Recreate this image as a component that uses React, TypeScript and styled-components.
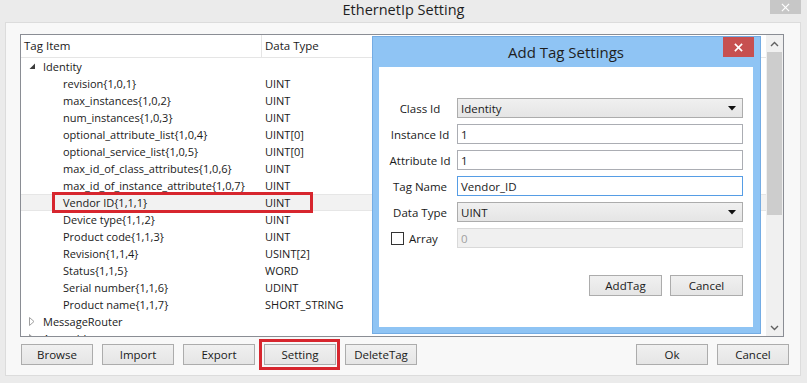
import styled, { createGlobalStyle } from "styled-components";

type TreeRow = {
  level: number;
  name: string;
  type?: string;
  expander?: "open" | "closed";
  selected?: boolean;
};

const rows: TreeRow[] = [
  { level: 0, name: "Identity", expander: "open" },
  { level: 1, name: "revision{1,0,1}", type: "UINT" },
  { level: 1, name: "max_instances{1,0,2}", type: "UINT" },
  { level: 1, name: "num_instances{1,0,3}", type: "UINT" },
  { level: 1, name: "optional_attribute_list{1,0,4}", type: "UINT[0]" },
  { level: 1, name: "optional_service_list{1,0,5}", type: "UINT[0]" },
  { level: 1, name: "max_id_of_class_attributes{1,0,6}", type: "UINT" },
  { level: 1, name: "max_id_of_instance_attribute{1,0,7}", type: "UINT" },
  { level: 1, name: "Vendor ID{1,1,1}", type: "UINT", selected: true },
  { level: 1, name: "Device type{1,1,2}", type: "UINT" },
  { level: 1, name: "Product code{1,1,3}", type: "UINT" },
  { level: 1, name: "Revision{1,1,4}", type: "USINT[2]" },
  { level: 1, name: "Status{1,1,5}", type: "WORD" },
  { level: 1, name: "Serial number{1,1,6}", type: "UDINT" },
  { level: 1, name: "Product name{1,1,7}", type: "SHORT_STRING" },
  { level: 0, name: "MessageRouter", expander: "closed" },
  { level: 0, name: "Assembly", expander: "closed" },
];

const GlobalStyle = createGlobalStyle`
  html, body {
    margin: 0;
    padding: 0;
    background: #ebebeb;
  }
  body {
    font-family: "Open Sans", "Noto Sans", sans-serif;
    color: #1a1a1a;
  }
  * { box-sizing: border-box; }
`;

const Window = styled.div`
  position: relative;
  width: 807px;
  height: 383px;
  overflow: hidden;
  background: #ebebeb;
  display: flex;
  flex-direction: column;
`;

const TitleBar = styled.div`
  height: 22px;
  display: grid;
  grid-template-columns: 1fr auto 1fr;
  align-items: start;
`;

const Title = styled.div`
  grid-column: 2;
  font-size: 14.5px;
  line-height: 20px;
  color: #1e1e1e;
`;

const WinClose = styled.div`
  grid-column: 3;
  justify-self: end;
  margin-right: 6px;
  width: 31px;
  height: 14px;
  background: #c7c7c7;
  display: flex;
  align-items: center;
  justify-content: center;
`;

const Panel = styled.div`
  margin: 0 6px 0 5px;
  height: 354px;
  border: 1px solid #dcdcdc;
  background: #f8f8f8;
  padding: 11px 11px 0 14px;
  display: flex;
  flex-direction: column;
`;

const ListBox = styled.div`
  width: 764px;
  height: 303px;
  border: 1px solid #8a8d94;
  background: #fff;
  display: flex;
`;

const ListContent = styled.div`
  flex: 1;
  overflow: hidden;
  font-size: 11px;
`;

const HeaderRow = styled.div`
  height: 23px;
  display: grid;
  grid-template-columns: 241px 1fr;
  border-bottom: 1px solid #e5e5e5;
`;

const HeaderCell = styled.div<{ $divider?: boolean }>`
  padding-left: 3px;
  line-height: 22px;
  font-size: 11.5px;
  border-right: ${({ $divider }) => ($divider ? "1px solid #e5e5e5" : "none")};
`;

const Row = styled.div<{ $selected?: boolean }>`
  height: 17px;
  display: grid;
  grid-template-columns: 241px 1fr;
  align-items: center;
  background: ${({ $selected }) => ($selected ? "#f2f2f2" : "transparent")};
  box-shadow: ${({ $selected }) =>
    $selected ? "inset 0 1px 0 #e6e6e6, inset 0 -1px 0 #e6e6e6" : "none"};
`;

const NameCell = styled.div<{ $level: number }>`
  display: flex;
  align-items: center;
  padding-left: ${({ $level }) => ($level === 0 ? 8 : 42)}px;
  white-space: nowrap;
  line-height: 17px;
`;

const Expander = styled.span`
  width: 14px;
  display: inline-flex;
  align-items: center;
`;

const TypeCell = styled.div`
  padding-left: 3px;
  white-space: nowrap;
  line-height: 17px;
`;

const ScrollBar = styled.div`
  width: 17px;
  background: #f0f0f0;
  display: flex;
  flex-direction: column;
  align-items: center;
`;

const ScrollArrow = styled.div`
  height: 17px;
  width: 100%;
  display: flex;
  align-items: center;
  justify-content: center;
`;

const Thumb = styled.div`
  width: 15px;
  height: 163px;
  background: #cdcdcd;
`;

const Track = styled.div`
  flex: 1;
`;

const ButtonRow = styled.div`
  display: flex;
  gap: 9px;
  margin-top: 7px;
  padding-left: 1px;
`;

const Spacer = styled.div`
  flex: 1;
`;

const Button = styled.div<{ $w?: number }>`
  width: ${({ $w }) => $w ?? 72}px;
  height: 21px;
  border: 1px solid #acacac;
  background: linear-gradient(#f0f0f0, #e5e5e5);
  font-size: 11.5px;
  display: flex;
  align-items: center;
  justify-content: center;
  color: #1a1a1a;
`;

const Marker = styled.div`
  position: absolute;
  border: 3px solid #d7262e;
`;

const Dialog = styled.div`
  position: absolute;
  left: 372px;
  top: 36px;
  width: 389px;
  height: 298px;
  background: #8fc4f4;
  border: 1px solid #74ace4;
  padding: 0 7px 6px 6px;
  display: flex;
  flex-direction: column;
`;

const DialogTitleBar = styled.div`
  height: 30px;
  display: grid;
  grid-template-columns: 1fr auto 1fr;
  align-items: start;
`;

const DialogTitle = styled.div`
  grid-column: 2;
  font-size: 15px;
  line-height: 30px;
  color: #1e1e1e;
`;

const DialogClose = styled.div`
  grid-column: 3;
  justify-self: end;
  margin-right: -1px;
  width: 31px;
  height: 20px;
  background: #c75050;
  display: flex;
  align-items: center;
  justify-content: center;
`;

const DialogClient = styled.div`
  flex: 1;
  background: #fff;
  padding: 31px 10px 0 5px;
  display: flex;
  flex-direction: column;
  font-size: 11.5px;
`;

const Form = styled.div`
  display: flex;
  flex-direction: column;
  gap: 6px;
`;

const FormRow = styled.div`
  display: flex;
  align-items: stretch;
  height: 20px;
  gap: 1px;
`;

const LabelCell = styled.div<{ $left?: boolean }>`
  width: 72px;
  flex: none;
  display: flex;
  align-items: center;
  justify-content: ${({ $left }) => ($left ? "flex-start" : "center")};
  padding-left: ${({ $left }) => ($left ? 7 : 0)}px;
  gap: 5px;
  white-space: nowrap;
`;

const CheckBox = styled.span`
  display: block;
  width: 13px;
  height: 13px;
  flex: none;
  border: 1px solid #333;
  background: #fff;
`;

const Field = styled.div<{ $focused?: boolean; $disabled?: boolean }>`
  width: 286px;
  border: 1px solid
    ${({ $focused, $disabled }) =>
      $focused ? "#569de5" : $disabled ? "#d9d9d9" : "#abadb3"};
  background: ${({ $disabled }) => ($disabled ? "#f0f0f0" : "#fff")};
  color: ${({ $disabled }) => ($disabled ? "#a0a0a0" : "#1a1a1a")};
  padding-left: 3px;
  display: flex;
  align-items: center;
`;

const Select = styled.div`
  width: 286px;
  border: 1px solid #acacac;
  background: linear-gradient(#f0f0f0, #e5e5e5);
  padding: 0 6px 0 3px;
  display: flex;
  align-items: center;
  justify-content: space-between;
`;

const DialogButtons = styled.div`
  display: flex;
  justify-content: flex-end;
  gap: 8px;
  margin-top: 27px;
`;

const DownArrow = () => (
  <svg width="8" height="5" viewBox="0 0 8 5">
    <polygon points="0,0 8,0 4,4.5" fill="#111" />
  </svg>
);

const Chevron = ({ up }: { up?: boolean }) => (
  <svg width="9" height="6" viewBox="0 0 9 6">
    <polyline
      points={up ? "1,5 4.5,1.5 8,5" : "1,1 4.5,4.5 8,1"}
      fill="none"
      stroke="#606060"
      strokeWidth="1.4"
    />
  </svg>
);

const ExpandIcon = ({ open }: { open: boolean }) =>
  open ? (
    <svg width="7" height="7" viewBox="0 0 7 7">
      <polygon points="6,0.5 6,6 0.5,6" fill="#3c3c3c" />
    </svg>
  ) : (
    <svg width="6" height="9" viewBox="0 0 6 9">
      <polygon points="0.5,0.5 5,4.5 0.5,8.5" fill="none" stroke="#a0a0a0" />
    </svg>
  );

const XMark = ({ size, weight }: { size: number; weight: number }) => (
  <svg width={size} height={size} viewBox="0 0 10 10">
    <line x1="1" y1="1" x2="9" y2="9" stroke="#fff" strokeWidth={weight} />
    <line x1="9" y1="1" x2="1" y2="9" stroke="#fff" strokeWidth={weight} />
  </svg>
);

export default function App() {
  return (
    <>
      <GlobalStyle />
      <Window>
        <TitleBar>
          <Title>EthernetIp Setting</Title>
          <WinClose>
            <XMark size={9} weight={1.3} />
          </WinClose>
        </TitleBar>
        <Panel>
          <ListBox>
            <ListContent>
              <HeaderRow>
                <HeaderCell $divider>Tag Item</HeaderCell>
                <HeaderCell>Data Type</HeaderCell>
              </HeaderRow>
              {rows.map((r) => (
                <Row key={r.name} $selected={r.selected}>
                  <NameCell $level={r.level}>
                    {r.expander && (
                      <Expander>
                        <ExpandIcon open={r.expander === "open"} />
                      </Expander>
                    )}
                    {r.name}
                  </NameCell>
                  <TypeCell>{r.type}</TypeCell>
                </Row>
              ))}
            </ListContent>
            <ScrollBar>
              <ScrollArrow>
                <Chevron up />
              </ScrollArrow>
              <Thumb />
              <Track />
              <ScrollArrow>
                <Chevron />
              </ScrollArrow>
            </ScrollBar>
          </ListBox>
          <ButtonRow>
            <Button>Browse</Button>
            <Button>Import</Button>
            <Button>Export</Button>
            <Button>Setting</Button>
            <Button>DeleteTag</Button>
            <Spacer />
            <Button>Ok</Button>
            <Button>Cancel</Button>
          </ButtonRow>
        </Panel>

        <Marker style={{ left: 52, top: 192, width: 261, height: 21 }} />
        <Marker style={{ left: 259, top: 339, width: 81, height: 31 }} />

        <Dialog>
          <DialogTitleBar>
            <DialogTitle>Add Tag Settings</DialogTitle>
            <DialogClose>
              <XMark size={9} weight={1.8} />
            </DialogClose>
          </DialogTitleBar>
          <DialogClient>
            <Form>
              <FormRow>
                <LabelCell>Class Id</LabelCell>
                <Select>
                  <span>Identity</span>
                  <DownArrow />
                </Select>
              </FormRow>
              <FormRow>
                <LabelCell>Instance Id</LabelCell>
                <Field>1</Field>
              </FormRow>
              <FormRow>
                <LabelCell>Attribute Id</LabelCell>
                <Field>1</Field>
              </FormRow>
              <FormRow>
                <LabelCell>Tag Name</LabelCell>
                <Field $focused>Vendor_ID</Field>
              </FormRow>
              <FormRow>
                <LabelCell>Data Type</LabelCell>
                <Select>
                  <span>UINT</span>
                  <DownArrow />
                </Select>
              </FormRow>
              <FormRow>
                <LabelCell $left>
                  <CheckBox />
                  Array
                </LabelCell>
                <Field $disabled>0</Field>
              </FormRow>
            </Form>
            <DialogButtons>
              <Button $w={73}>AddTag</Button>
              <Button $w={73}>Cancel</Button>
            </DialogButtons>
          </DialogClient>
        </Dialog>
      </Window>
    </>
  );
}
